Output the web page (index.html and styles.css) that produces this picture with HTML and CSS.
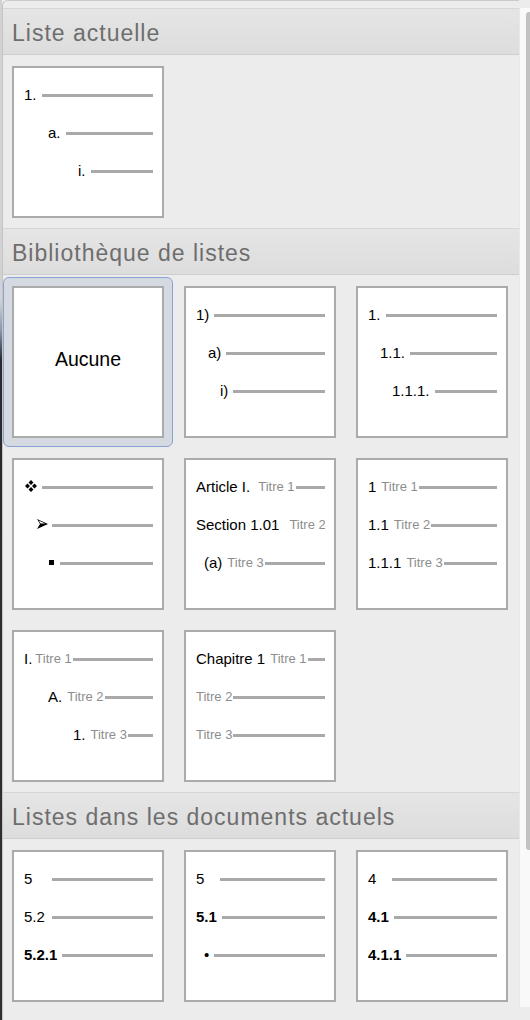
FILE: index.html
```html
<!DOCTYPE html>
<html lang="fr">
<head>
<meta charset="utf-8">
<title>Listes</title>
<link rel="stylesheet" href="styles.css">
</head>
<body>
<div class="window">
  <div class="edge"></div>
  <div class="panel">
    <div class="head">Liste actuelle</div>
    <div class="grid">
      <div class="cell"><div class="tile">
        <div class="row"><span class="n">1.</span><span class="ln"></span></div>
        <div class="row in24"><span class="n">a.</span><span class="ln"></span></div>
        <div class="row in54"><span class="n">i.</span><span class="ln"></span></div>
      </div></div>
    </div>

    <div class="head">Bibliothèque de listes</div>
    <div class="grid">
      <div class="cell sel"><div class="tile none">Aucune</div></div>
      <div class="cell"><div class="tile">
        <div class="row"><span class="n">1)</span><span class="ln"></span></div>
        <div class="row in12"><span class="n">a)</span><span class="ln"></span></div>
        <div class="row in24"><span class="n">i)</span><span class="ln"></span></div>
      </div></div>
      <div class="cell"><div class="tile">
        <div class="row"><span class="n">1.</span><span class="ln"></span></div>
        <div class="row in12"><span class="n">1.1.</span><span class="ln"></span></div>
        <div class="row in24"><span class="n">1.1.1.</span><span class="ln"></span></div>
      </div></div>

      <div class="cell"><div class="tile">
        <div class="row">
          <svg class="sym s1" width="12" height="12" viewBox="0 0 12 12" aria-hidden="true">
            <path d="M6 0L8.5 2.5L6 5L3.5 2.5Z M2.5 3.5L5 6L2.5 8.5L0 6Z M9.5 3.5L12 6L9.5 8.5L7 6Z M6 7L8.5 9.5L6 12L3.5 9.5Z" fill="#000"/>
          </svg><span class="ln"></span>
        </div>
        <div class="row in12">
          <svg class="sym s2" width="11" height="10" viewBox="0 0 11 10" aria-hidden="true">
            <path d="M0 0L11 5L0 10L3 5Z" fill="#000"/>
            <path d="M1.6 1.6L8.2 4.6L3.6 4.6Z" fill="#fff"/>
          </svg><span class="ln"></span>
        </div>
        <div class="row in24"><span class="sym sq"></span><span class="ln"></span></div>
      </div></div>
      <div class="cell"><div class="tile">
        <div class="row"><span class="n">Article I.</span><span class="t wide">Titre 1</span><span class="ln"></span></div>
        <div class="row"><span class="n">Section 1.01</span><span class="t wider">Titre 2</span><span class="ln"></span></div>
        <div class="row in8"><span class="n">(a)</span><span class="t">Titre 3</span><span class="ln"></span></div>
      </div></div>
      <div class="cell"><div class="tile">
        <div class="row"><span class="n">1</span><span class="t">Titre 1</span><span class="ln"></span></div>
        <div class="row"><span class="n">1.1</span><span class="t">Titre 2</span><span class="ln"></span></div>
        <div class="row"><span class="n">1.1.1</span><span class="t">Titre 3</span><span class="ln"></span></div>
      </div></div>

      <div class="cell"><div class="tile">
        <div class="row"><span class="n">I.</span><span class="t narrow">Titre 1</span><span class="ln"></span></div>
        <div class="row in24"><span class="n">A.</span><span class="t">Titre 2</span><span class="ln"></span></div>
        <div class="row in49"><span class="n">1.</span><span class="t">Titre 3</span><span class="ln"></span></div>
      </div></div>
      <div class="cell"><div class="tile">
        <div class="row"><span class="n">Chapitre 1</span><span class="t">Titre 1</span><span class="ln"></span></div>
        <div class="row"><span class="t first">Titre 2</span><span class="ln"></span></div>
        <div class="row"><span class="t first">Titre 3</span><span class="ln"></span></div>
      </div></div>
    </div>

    <div class="head">Listes dans les documents actuels</div>
    <div class="grid">
      <div class="cell"><div class="tile">
        <div class="row"><span class="n tab23">5</span><span class="ln"></span></div>
        <div class="row"><span class="n tab23">5.2</span><span class="ln"></span></div>
        <div class="row"><span class="n bold">5.2.1</span><span class="ln"></span></div>
      </div></div>
      <div class="cell"><div class="tile">
        <div class="row"><span class="n tab19">5</span><span class="ln"></span></div>
        <div class="row"><span class="n bold">5.1</span><span class="ln"></span></div>
        <div class="row in8"><span class="n">•</span><span class="ln"></span></div>
      </div></div>
      <div class="cell"><div class="tile">
        <div class="row"><span class="n tab19">4</span><span class="ln"></span></div>
        <div class="row"><span class="n bold">4.1</span><span class="ln"></span></div>
        <div class="row"><span class="n bold">4.1.1</span><span class="ln"></span></div>
      </div></div>
    </div>
  </div>
  <div class="track"><div class="thumb"></div></div>
</div>
</body>
</html>
```

FILE: styles.css
```css
html, body {
  margin: 0;
  padding: 0;
}

body {
  background: #ececec;
  font-family: "Liberation Sans", Arial, sans-serif;
  color: #000;
}

.window {
  display: flex;
  width: 530px;
  height: 1020px;
  overflow: hidden;
}

.edge {
  width: 2px;
  flex: none;
  background: linear-gradient(to bottom, #d2d2d2 0, #d2d2d2 300px, #8d97a6 330px, #2a2a2a 360px, #303030 1020px);
}

.panel {
  width: 517px;
  flex: none;
  box-sizing: border-box;
  border-left: 1px solid #c4c4c4;
  border-top: 1px solid #cbcbcb;
  border-top-left-radius: 6px;
  background: #ececec;
  padding-top: 7px;
}

.head {
  height: 42px;
  padding: 3px 0 0 9px;
  line-height: 42px;
  border-top: 1px solid #d6d6d6;
  border-bottom: 1px solid #cecece;
  background: linear-gradient(to bottom, #e5e5e5, #dddddd);
  color: #6e6e6e;
  font-size: 23px;
  letter-spacing: 1px;
  white-space: nowrap;
}

.grid {
  display: grid;
  grid-template-columns: repeat(3, 170px);
  grid-auto-rows: 170px;
  gap: 2px;
  padding: 2px 0 1px;
}

.cell {
  display: flex;
  align-items: center;
  justify-content: center;
  box-sizing: border-box;
}

.cell.sel {
  background: #d5dae2;
  border: 1px solid #87a3d4;
  border-radius: 6px;
}

.tile {
  width: 152px;
  height: 152px;
  box-sizing: border-box;
  border: 2px solid #ababab;
  background: #fff;
  padding: 7px 9px 0 10px;
  overflow: hidden;
}

.tile.none {
  display: flex;
  align-items: center;
  justify-content: center;
  padding: 0 0 6px;
  font-size: 19.5px;
}

.row {
  display: flex;
  align-items: center;
  height: 38px;
  white-space: nowrap;
  overflow: hidden;
}

.in8 { padding-left: 8px; }
.in12 { padding-left: 12px; }
.in24 { padding-left: 24px; }
.in49 { padding-left: 49px; }
.in54 { padding-left: 54px; }

.n {
  flex: none;
  font-size: 15px;
}

.n.bold {
  font-weight: bold;
}

.tab23 { min-width: 23px; }
.tab19 { min-width: 19px; }

.t {
  flex: none;
  margin-left: 5px;
  color: #8d8d8d;
  font-size: 13px;
}

.t.wide { margin-left: 8px; }
.t.wider { margin-left: 10px; }
.t.narrow { margin-left: 3px; }
.t.first { margin-left: 0; }

.sym {
  flex: none;
  display: block;
}

.s1 { margin-left: 1px; }
.s2 { margin-left: 1px; }

.sq {
  width: 5px;
  height: 5px;
  margin-left: 1px;
  background: #000;
}

.ln {
  flex: 1 1 0;
  min-width: 0;
  height: 3px;
  margin-left: 5px;
  margin-top: 2px;
  background: #a9a9a9;
}

.s1 + .ln { margin-left: 5px; }
.s2 + .ln { margin-left: 4px; }
.sq + .ln { margin-left: 6px; }

.t + .ln {
  margin-left: 1px;
}

.track {
  width: 11px;
  flex: none;
  margin-top: 8px;
  height: 999px;
  box-sizing: border-box;
  border-left: 1px solid #e8e8e8;
  background: #f9f9f9;
}

.thumb {
  width: 4px;
  height: 838px;
  margin: 4px 0 0 6px;
  background: #c2c2c2;
  border-radius: 3px 0 0 3px;
}
```
